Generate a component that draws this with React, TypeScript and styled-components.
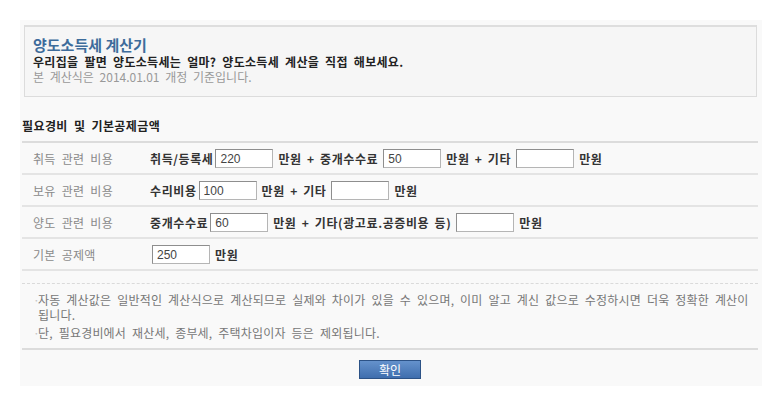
import React from "react";
import styled, { createGlobalStyle } from "styled-components";

const Global = createGlobalStyle`
  html, body { margin: 0; padding: 0; background: #ffffff; }
  body { font-family: "Noto Sans CJK KR", "Noto Sans", sans-serif; font-size: 12px; color: #333; }
  * { box-sizing: border-box; }
`;

const Wrapper = styled.div`
  margin: 20px 0 0 20px;
  width: 742px;
  background: #f9f9f9;
  padding: 5px 4px 7px 2px;
`;

const HeaderBox = styled.div`
  margin: 0 1px 0 2px;
  border: 1px solid #dcdcdc;
  border-top: 2px solid #dedede;
  background: #f6f6f6;
  padding: 9px 8px 12px 8px;
`;

const Title = styled.h1`
  margin: 0;
  font-size: 15px;
  line-height: 17px;
  font-weight: 700;
  color: #3d6c9b;
`;

const Lead = styled.p`
  margin: 1px 0 0;
  font-size: 12px;
  line-height: 15px;
  font-weight: 700;
  color: #222;
  letter-spacing: 0.3px;
  word-spacing: 3px;
`;

const Sub = styled.p`
  margin: 0;
  font-size: 12px;
  line-height: 15px;
  color: #999;
  word-spacing: 3px;
`;

const SectionTitle = styled.h2`
  margin: 21px 0 7px;
  font-size: 12px;
  line-height: 16px;
  font-weight: 700;
  color: #222;
  letter-spacing: 0.4px;
  word-spacing: 3px;
`;

const Table = styled.div`
  border-top: 2px solid #dcdcdc;
`;

const Row = styled.div`
  display: grid;
  grid-template-columns: 128px 1fr;
  align-items: center;
  height: 32px;
  border-bottom: 2px solid #e4e4e4;
`;

const Label = styled.div`
  padding-left: 11px;
  color: #8a8a8a;
  font-size: 12px;
  letter-spacing: 0.3px;
  word-spacing: 3px;
`;

const Cell = styled.div`
  display: flex;
  align-items: center;
  font-weight: 700;
  color: #333;
  white-space: pre;
  letter-spacing: 0.6px;
  word-spacing: 2px;
`;

const Field = styled.input<{ $w?: number }>`
  width: ${(p) => p.$w ?? 58}px;
  height: 19px;
  margin: 0 5px;
  padding: 1px 4px 0;
  border: 1px solid #b5b5b5;
  border-top-color: #8e8e8e;
  border-left-color: #8e8e8e;
  background: #fff;
  font-family: "Liberation Sans", Arial, sans-serif;
  font-size: 12px;
  letter-spacing: 0;
  color: #444;
  outline: none;
  &:first-child { margin-left: 2px; }
`;

const Notes = styled.ul`
  list-style: none;
  margin: 12px 0 0;
  padding: 8px 0 8px;
  border-top: 1px dashed #dadada;
  border-bottom: 2px solid #dcdcdc;
`;

const Note = styled.li`
  width: 736px;
  padding-left: 16px;
  padding-right: 0;
  text-indent: -5px;
  font-size: 12px;
  line-height: 15px;
  color: #777;
  letter-spacing: 0.2px;
  word-spacing: 3px;
  word-break: keep-all;
  & + & { margin-top: 3px; }
  &::before {
    content: "·";
    display: inline-block;
    width: 5px;
    text-indent: 0;
    color: #c4c4c4;
  }
`;

const Actions = styled.div`
  display: flex;
  justify-content: center;
  padding: 10px 0 0;
`;

const Button = styled.button`
  width: 62px;
  height: 19px;
  padding: 0;
  border: 1px solid #2c5286;
  background: linear-gradient(#6592cc, #3f6eae);
  color: #fff;
  font-family: "Noto Sans CJK KR", sans-serif;
  font-size: 12px;
  line-height: 17px;
  cursor: pointer;
`;

export default function App() {
  return (
    <>
      <Global />
      <Wrapper>
        <HeaderBox>
          <Title>양도소득세 계산기</Title>
          <Lead>우리집을 팔면 양도소득세는 얼마? 양도소득세 계산을 직접 해보세요.</Lead>
          <Sub>본 계산식은 2014.01.01 개정 기준입니다.</Sub>
        </HeaderBox>
        <SectionTitle>필요경비 및 기본공제금액</SectionTitle>
        <Table>
          <Row>
            <Label>취득 관련 비용</Label>
            <Cell>
              취득/등록세<Field defaultValue="220" />만원 + 중개수수료<Field defaultValue="50" />만원 + 기타<Field defaultValue="" />만원
            </Cell>
          </Row>
          <Row>
            <Label>보유 관련 비용</Label>
            <Cell>
              수리비용<Field defaultValue="100" />만원 + 기타<Field defaultValue="" />만원
            </Cell>
          </Row>
          <Row>
            <Label>양도 관련 비용</Label>
            <Cell>
              중개수수료<Field defaultValue="60" />만원 + 기타(광고료.공증비용 등)<Field defaultValue="" />만원
            </Cell>
          </Row>
          <Row>
            <Label>기본 공제액</Label>
            <Cell>
              <Field defaultValue="250" />만원
            </Cell>
          </Row>
        </Table>
        <Notes>
          <Note>
            자동 계산값은 일반적인 계산식으로 계산되므로 실제와 차이가 있을 수 있으며, 이미 알고 계신 값으로 수정하시면 더욱 정확한 계산이 됩니다.
          </Note>
          <Note>단, 필요경비에서 재산세, 종부세, 주택차입이자 등은 제외됩니다.</Note>
        </Notes>
        <Actions>
          <Button type="button">확인</Button>
        </Actions>
      </Wrapper>
    </>
  );
}
